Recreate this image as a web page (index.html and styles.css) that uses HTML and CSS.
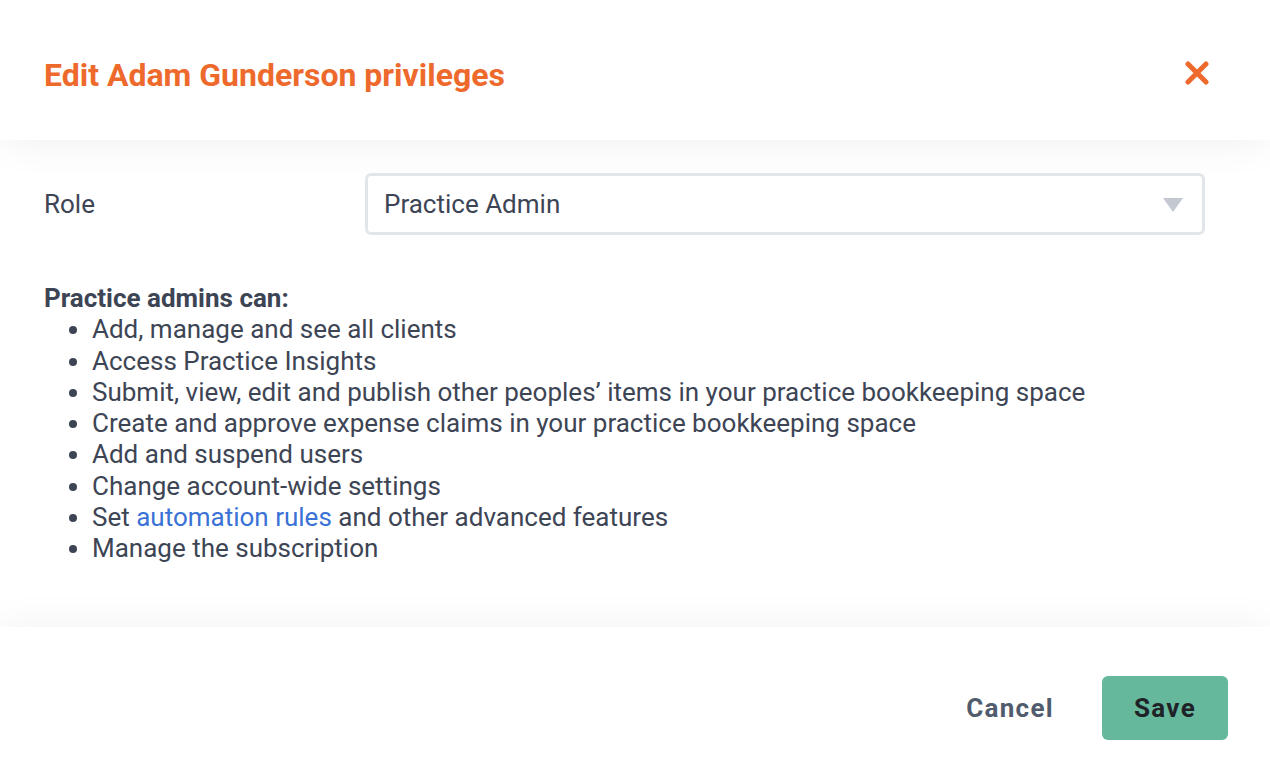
FILE: index.html
```html
<!DOCTYPE html>
<html lang="en">
<head>
<meta charset="utf-8">
<title>Edit privileges</title>
<link rel="stylesheet" href="styles.css">
</head>
<body>
<div class="modal">
  <header class="modal-header">
    <h1 class="modal-title">Edit Adam Gunderson privileges</h1>
    <button class="close-btn" aria-label="Close">
      <svg width="24" height="24" viewBox="0 0 24 24"><path d="M3 3 L21 21 M21 3 L3 21" stroke="#ee6a2c" stroke-width="5" stroke-linecap="round"/></svg>
    </button>
  </header>
  <main class="modal-body">
    <div class="role-row">
      <label class="role-label">Role</label>
      <div class="select">
        <span class="select-value">Practice Admin</span>
        <svg class="select-arrow" width="20" height="14" viewBox="0 0 20 14"><path d="M0 0 H20 L10 14 Z" fill="#c4c9d1"/></svg>
      </div>
    </div>
    <div class="perms">
      <p class="perms-title">Practice admins can:</p>
      <ul class="perms-list">
        <li>Add, manage and see all clients</li>
        <li>Access Practice Insights</li>
        <li>Submit, view, edit and publish other peoples’ items in your practice bookkeeping space</li>
        <li>Create and approve expense claims in your practice bookkeeping space</li>
        <li>Add and suspend users</li>
        <li>Change account-wide settings</li>
        <li>Set <a href="#" class="link">automation rules</a> and other advanced features</li>
        <li>Manage the subscription</li>
      </ul>
    </div>
  </main>
  <footer class="modal-footer">
    <button class="btn-cancel">Cancel</button>
    <button class="btn-save">Save</button>
  </footer>
</div>
</body>
</html>
```
FILE: styles.css
```css
* { box-sizing: border-box; }
html, body { margin: 0; padding: 0; background: #fff; }
body {
  font-family: Roboto, "Liberation Sans", sans-serif;
  color: #3d4555;
  width: 1270px;
  height: 782px;
  overflow: hidden;
}
.modal {
  display: flex;
  flex-direction: column;
  height: 782px;
}
.modal-header {
  height: 140px;
  flex: none;
  display: flex;
  align-items: center;
  justify-content: space-between;
  padding: 10px 61px 0 44px;
  background: #fff;
  position: relative;
  z-index: 2;
  box-shadow: 0 0 40px rgba(0,0,0,0.07);
}
.modal-title {
  margin: 0;
  font-size: 32px;
  font-weight: 700;
  color: #ee6a2c;
  letter-spacing: 0;
}
.close-btn {
  border: 0;
  background: none;
  padding: 0;
  width: 24px;
  height: 24px;
  margin-top: -4px;
  cursor: pointer;
  display: flex;
}
.modal-body {
  flex: 1;
  padding: 33px 65px 0 44px;
  background: #fff;
}
.role-row {
  display: flex;
  align-items: center;
}
.role-label {
  width: 321px;
  font-size: 26px;
  color: #3d4555;
}
.select {
  flex: 1;
  height: 62px;
  border: 3px solid #e2e5ea;
  border-radius: 6px;
  display: flex;
  align-items: center;
  justify-content: space-between;
  padding: 0 19px 0 16px;
  background: #fff;
}
.select-value {
  font-size: 26px;
  color: #3d4555;
}
.select-arrow { margin-top: 1px; }
.perms {
  margin-top: 48px;
  font-size: 26px;
  line-height: 31.3px;
}
.perms-title {
  margin: 0;
  font-weight: 700;
}
.perms-list {
  margin: 0;
  padding-left: 48px;
}
.link {
  color: #3a72d6;
  text-decoration: none;
}
.modal-footer {
  height: 155px;
  flex: none;
  display: flex;
  align-items: center;
  justify-content: flex-end;
  gap: 48px;
  padding: 7px 42px 0 0;
  background: #fff;
  position: relative;
  z-index: 2;
  box-shadow: 0 0 40px rgba(0,0,0,0.06);
}
.btn-cancel {
  border: 0;
  background: none;
  font-family: inherit;
  font-size: 26px;
  font-weight: 700;
  letter-spacing: 1.3px;
  color: #505c6e;
  padding: 0;
  cursor: pointer;
}
.btn-save {
  width: 126px;
  height: 64px;
  border: 0;
  border-radius: 6px;
  background: #66b89c;
  font-family: inherit;
  font-size: 26px;
  font-weight: 700;
  letter-spacing: 1.3px;
  color: #1f2328;
  cursor: pointer;
}
```
